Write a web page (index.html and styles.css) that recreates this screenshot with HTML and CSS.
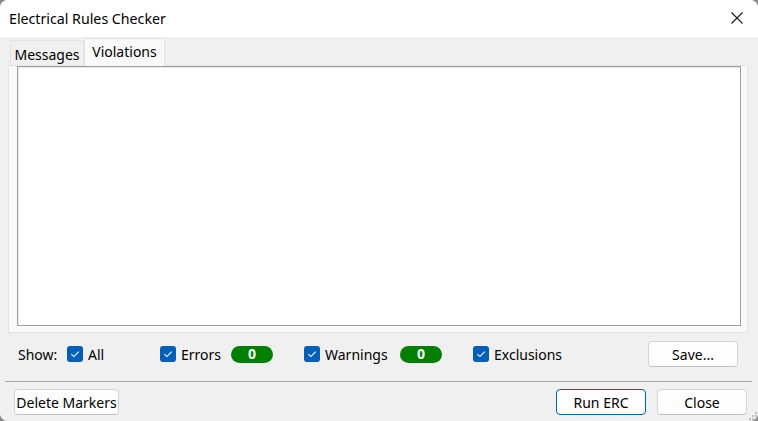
FILE: index.html
```html
<!DOCTYPE html>
<html>
<head>
<meta charset="utf-8">
<link rel="stylesheet" href="styles.css">
</head>
<body>
<div class="window">
  <div class="titlebar">
    <span class="title">Electrical Rules Checker</span>
    <span class="close">
      <svg width="12" height="12" viewBox="0 0 12 12"><path d="M0.5 0.5 L11.5 11.5 M11.5 0.5 L0.5 11.5" stroke="#1a1a1a" stroke-width="1.1" fill="none"/></svg>
    </span>
  </div>
  <div class="content">
    <div class="tabs">
      <div class="tab">Messages</div>
      <div class="tab active">Violations</div>
    </div>
    <div class="panel">
      <div class="listbox"></div>
    </div>
    <div class="showrow">
      <span class="showlbl">Show:</span>
      <label class="grp g-all"><span class="cb"><svg width="16" height="16" viewBox="0 0 16 16"><path d="M4.3 8.2 L6.9 10.6 L11.7 5.6" stroke="#fff" stroke-width="1.1" fill="none"/></svg></span>All</label>
      <label class="grp g-err"><span class="cb"><svg width="16" height="16" viewBox="0 0 16 16"><path d="M4.3 8.2 L6.9 10.6 L11.7 5.6" stroke="#fff" stroke-width="1.1" fill="none"/></svg></span>Errors</label>
      <span class="badge">0</span>
      <label class="grp g-warn"><span class="cb"><svg width="16" height="16" viewBox="0 0 16 16"><path d="M4.3 8.2 L6.9 10.6 L11.7 5.6" stroke="#fff" stroke-width="1.1" fill="none"/></svg></span>Warnings</label>
      <span class="badge">0</span>
      <label class="grp g-exc"><span class="cb"><svg width="16" height="16" viewBox="0 0 16 16"><path d="M4.3 8.2 L6.9 10.6 L11.7 5.6" stroke="#fff" stroke-width="1.1" fill="none"/></svg></span>Exclusions</label>
      <button class="btn save">Save...</button>
    </div>
    <div class="sep"></div>
    <div class="btnrow">
      <button class="btn del">Delete Markers</button>
      <button class="btn run">Run ERC</button>
      <button class="btn closebtn">Close</button>
    </div>
    <svg class="grip" width="9" height="9" viewBox="0 0 9 9">
      <g fill="#bdbdbd">
        <rect x="6" y="0" width="2" height="2"/>
        <rect x="3" y="3" width="2" height="2"/><rect x="6" y="3" width="2" height="2"/>
        <rect x="0" y="6" width="2" height="2"/><rect x="3" y="6" width="2" height="2"/><rect x="6" y="6" width="2" height="2"/>
      </g>
    </svg>
  </div>
</div>
</body>
</html>
```

FILE: styles.css
```css
html, body {
  margin: 0;
  padding: 0;
  background: #8a8a8a;
}
body {
  width: 758px;
  height: 421px;
  overflow: hidden;
  font-family: "Noto Sans", "Open Sans", sans-serif;
  font-size: 14px;
  color: #000;
}
.window {
  width: 758px;
  height: 421px;
  display: flex;
  flex-direction: column;
  border-radius: 8px;
  overflow: hidden;
  background: #f0f0f0;
}
.titlebar {
  height: 37px;
  flex: none;
  background: #ffffff;
  display: flex;
  align-items: center;
  padding-left: 9px;
  padding-right: 15px;
}
.title {
  font-size: 14.2px;
  flex: 1;
  margin-top: -1px;
}
.close {
  display: flex;
  width: 12px;
  height: 12px;
  margin-top: -1px;
}
.content {
  flex: 1;
  position: relative;
  display: flex;
  flex-direction: column;
  background: #f0f0f0;
}
.tabs {
  display: flex;
  align-items: flex-end;
  height: 27px;
  margin-top: 1px;
  padding-left: 10px;
  position: relative;
  z-index: 1;
}
.tab {
  height: 25px;
  box-sizing: border-box;
  border: 1px solid #e3e3e3;
  border-bottom: none;
  background: #f0f0f0;
  display: flex;
  align-items: center;
  padding-top: 3px;
  width: 74px;
  justify-content: center;
  font-size: 14px;
}
.tab.active {
  height: 28px;
  width: 81px;
  background: #f9f9f9;
  border-color: #e3e3e3;
  padding-top: 0;
  margin-bottom: -1px;
  padding-bottom: 2px;
}
.panel {
  margin: 0 10px 0 8px;
  height: 268px;
  box-sizing: border-box;
  border: 1px solid #e3e3e3;
  background: #f9f9f9;
  padding: 0 6px 6px 8px;
  display: flex;
}
.listbox {
  flex: 1;
  background: #fff;
  border: 1px solid #a0a0a0;
  box-shadow: inset 1px 1px 0 #e8e8e8;
}
.showrow {
  display: flex;
  align-items: center;
  height: 26px;
  margin-top: 8px;
  padding-left: 18px;
  padding-right: 20px;
}
.showlbl {
  width: 49px;
}
.grp {
  display: flex;
  align-items: center;
  gap: 5px;
}
.g-all { width: 93px; }
.g-err { width: 71px; }
.g-warn { width: 96px; }
.g-exc { width: 175px; }
.cb {
  width: 16px;
  height: 16px;
  border-radius: 3px;
  background: #005fb8;
  display: flex;
  flex: none;
}
.badge {
  width: 42px;
  height: 17px;
  border-radius: 9px;
  background: #008000;
  color: #fff;
  font-weight: bold;
  font-size: 14px;
  display: flex;
  align-items: center;
  justify-content: center;
  margin-right: 31px;
  line-height: 1;
}
.btn {
  font-family: "Noto Sans", "Open Sans", sans-serif;
  font-size: 14px;
  color: #000;
  background: #fdfdfd;
  border: 1px solid #d4d4d4;
  border-bottom-color: #c4c4c4;
  border-radius: 4px;
  height: 26px;
  padding: 0;
  margin: 0;
  display: flex;
  align-items: center;
  justify-content: center;
}
.save {
  width: 90px;
  margin-left: auto;
}
.sep {
  height: 1px;
  background: #a9a9a9;
  margin: 14px 6px 0 5px;
}
.btnrow {
  display: flex;
  margin-top: 7px;
  padding-left: 14px;
  padding-right: 11px;
  gap: 11px;
}
.del {
  width: 105px;
  margin-right: auto;
}
.run {
  width: 90px;
  border-color: #005fb8;
}
.closebtn {
  width: 90px;
}
.grip {
  position: absolute;
  right: 0;
  bottom: 0;
}
```
